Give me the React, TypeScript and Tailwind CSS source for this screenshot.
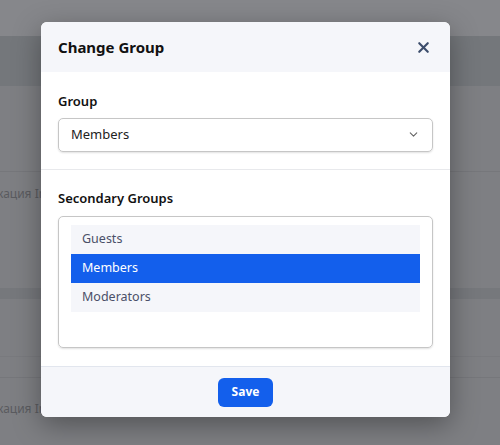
import { X, ChevronDown } from 'lucide-react';

const secondary = [
  { name: 'Guests', selected: false },
  { name: 'Members', selected: true },
  { name: 'Moderators', selected: false },
];

function Backdrop() {
  return (
    <div className="flex flex-col h-full bg-[#7e7f83]">
      <div className="h-[36px] bg-[#86878b]" />
      <div className="h-[50px] bg-[#74777b]" />
      <div className="h-[86px] border-b border-[#76777b]" />
      <div className="h-[116px] pt-[13px]">
        <span className="block -ml-[3px] text-[12px] text-[#5a5b5f]">кация Instagram</span>
      </div>
      <div className="h-[11px] bg-[#76787c]" />
      <div className="h-[58px] border-b border-[#797a7e]" />
      <div className="h-[21px] border-b border-[#76777b]" />
      <div className="pt-[22px]">
        <span className="block -ml-[3px] text-[12px] text-[#5a5b5f]">кация Instagram</span>
      </div>
    </div>
  );
}

export default function App() {
  return (
    <div
      className="relative w-[500px] h-[445px] overflow-hidden"
      style={{ fontFamily: '"Noto Sans", "Open Sans", sans-serif' }}
    >
      <Backdrop />

      {/* Change group dialog */}
      <div className="absolute left-[41px] top-[22px] w-[409px] rounded-md bg-white overflow-hidden shadow-[0_8px_28px_rgba(0,0,0,0.35)]">
        <div className="flex items-center justify-between h-[50px] px-[17px] bg-[#f5f6fa]">
          <h2 className="text-[15px] font-bold text-[#111]">Change Group</h2>
          <X className="w-[17px] h-[17px] text-[#3c4d6b] mr-[1px]" strokeWidth={3} />
        </div>

        <div className="px-[17px] pt-[20px] pb-[17px] border-b border-[#e8e9ec]">
          <label className="block text-[13px] font-semibold text-[#111] mb-[6px]">Group</label>
          <div className="flex items-center justify-between h-[34px] px-[12px] rounded-[5px] border border-[#c6c6c6] shadow-[0_1px_2px_rgba(0,0,0,0.12)]">
            <span className="text-[13px] text-[#222]">Members</span>
            <ChevronDown className="w-[13px] h-[13px] text-[#666]" strokeWidth={2} />
          </div>
        </div>

        <div className="px-[17px] pt-[19px] pb-[18px]">
          <label className="block text-[13px] font-semibold text-[#111] mb-[8px]">Secondary Groups</label>
          <div className="h-[132px] rounded-[5px] border border-[#c6c6c6] shadow-[0_1px_2px_rgba(0,0,0,0.12)] px-[12px] pt-[8px]">
            {secondary.map((g) => (
              <div
                key={g.name}
                className={
                  g.selected
                    ? 'h-[29px] flex items-center px-[11px] bg-[#135fec] text-white text-[12.5px]'
                    : 'h-[29px] flex items-center px-[11px] bg-[#f5f6fa] text-[#4a5068] text-[12.5px]'
                }
              >
                {g.name}
              </div>
            ))}
          </div>
        </div>

        <div className="flex justify-center items-center h-[51px] bg-[#f5f6fa] border-t border-[#e2e6ee]">
          <button className="h-[29px] px-[14px] rounded-[6px] bg-[#135fec] text-white text-[12px] font-bold">
            Save
          </button>
        </div>
      </div>
    </div>
  );
}
